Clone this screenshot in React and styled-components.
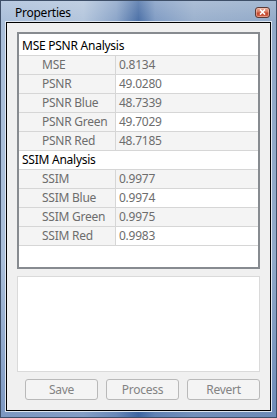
import React from "react";
import styled, { createGlobalStyle } from "styled-components";

const Global = createGlobalStyle`
  html, body { margin: 0; padding: 0; background: #fff; }
  body { font-family: "Noto Sans", "Open Sans", sans-serif; }
`;

const Window = styled.div`
  box-sizing: border-box;
  width: 277px;
  height: 418px;
  border: 1px solid #3e4f68;
  display: flex;
  flex-direction: column;
  background:
    linear-gradient(to bottom, rgba(255,255,255,0.18), rgba(255,255,255,0) 22px),
    linear-gradient(to right, #a9bed9 0%, #b3c5dc 30%, #8aa4c8 42%, #4a6fa6 50%, #7f9bc3 56%, #9ab0cd 70%, #91a9c8 100%);
`;

const TitleBar = styled.div`
  height: 21px;
  flex: none;
  display: flex;
  align-items: center;
  justify-content: space-between;
  padding: 0 6px 0 14px;
`;

const Title = styled.span`
  font-size: 12px;
  letter-spacing: -0.25px;
  color: #000;
  line-height: 16px;
  margin-top: 2px;
`;

const CloseButton = styled.div`
  box-sizing: border-box;
  width: 15px;
  height: 11px;
  margin-top: 1px;
  border: 1px solid #5b3a36;
  border-radius: 3px;
  background: linear-gradient(to bottom, #e9a792 0%, #d7785f 45%, #c2452b 55%, #d0644a 100%);
  box-shadow: inset 0 0 0 1px rgba(255, 220, 210, 0.45);
  display: flex;
  align-items: center;
  justify-content: center;
`;

const FrameBody = styled.div`
  flex: 1;
  display: flex;
  padding: 0 5px 6px 5px;
  background: linear-gradient(to bottom, rgba(0,0,0,0) 0%, rgba(40,80,150,0.0) 60%, rgba(40,80,150,0.35) 100%);
`;

const Client = styled.div`
  flex: 1;
  box-sizing: border-box;
  border: 1px solid #000;
  box-shadow: 0 0 0 1px #dfe7f1;
  margin: 0 0 0 0;
  background: #f0f0f0;
  display: flex;
  flex-direction: column;
  padding: 9px 10px 10px 10px;
`;

const Grid = styled.div`
  box-sizing: border-box;
  height: 237px;
  border: 2px solid #878b90;
  background: #fff;
  padding-top: 3px;
  display: flex;
  flex-direction: column;
`;

const CategoryRow = styled.div`
  box-sizing: border-box;
  height: 19px;
  border-bottom: 1px solid #d6d6d6;
  background: #fff;
  font-size: 12px;
  letter-spacing: -0.25px;
  color: #000;
  line-height: 18px;
  padding-left: 3px;
`;

const PropRow = styled.div`
  box-sizing: border-box;
  height: 19px;
  border-bottom: 1px solid #d6d6d6;
  display: grid;
  grid-template-columns: 97px 1fr;
  font-size: 12px;
  letter-spacing: -0.25px;
  line-height: 18px;
  color: #6d6d6d;
`;

const NameCell = styled.div`
  background: #f4f4f4;
  padding-left: 23px;
  border-right: 1px solid #d6d6d6;
`;

const ValueCell = styled.div`
  background: ${(p) => (p.$alt ? "#ffffff" : "#f4f4f4")};
  padding-left: 3px;
`;

const TextBox = styled.div`
  box-sizing: border-box;
  margin-top: 7px;
  height: 96px;
  border: 1px solid #dadada;
  background: #fff;
`;

const ButtonRow = styled.div`
  margin-top: 7px;
  display: flex;
  justify-content: flex-end;
  gap: 8px;
`;

const Button = styled.button`
  box-sizing: border-box;
  width: 73px;
  height: 21px;
  padding: 0;
  border: 1px solid #b9b9b9;
  border-radius: 3px;
  background: #f4f4f4;
  color: #838383;
  font-family: "Noto Sans", "Open Sans", sans-serif;
  font-size: 12px;
  letter-spacing: -0.25px;
  line-height: 18px;
`;

const groups = [
  {
    title: "MSE PSNR Analysis",
    rows: [
      ["MSE", "0.8134"],
      ["PSNR", "49.0280"],
      ["PSNR Blue", "48.7339"],
      ["PSNR Green", "49.7029"],
      ["PSNR Red", "48.7185"],
    ],
  },
  {
    title: "SSIM Analysis",
    rows: [
      ["SSIM", "0.9977"],
      ["SSIM Blue", "0.9974"],
      ["SSIM Green", "0.9975"],
      ["SSIM Red", "0.9983"],
    ],
  },
];

export default function App() {
  return (
    <>
      <Global />
      <Window>
        <TitleBar>
          <Title>Properties</Title>
          <CloseButton>
            <svg width="7" height="6" viewBox="0 0 7 6">
              <path d="M1 0.5 L6 5.5 M6 0.5 L1 5.5" stroke="#fff" strokeWidth="1.6" />
            </svg>
          </CloseButton>
        </TitleBar>
        <FrameBody>
          <Client>
            <Grid>
              {groups.map((g) => (
                <React.Fragment key={g.title}>
                  <CategoryRow>{g.title}</CategoryRow>
                  {g.rows.map(([n, v], i) => (
                    <PropRow key={n}>
                      <NameCell>{n}</NameCell>
                      <ValueCell $alt={i % 2 === 1}>{v}</ValueCell>
                    </PropRow>
                  ))}
                </React.Fragment>
              ))}
            </Grid>
            <TextBox />
            <ButtonRow>
              <Button disabled>Save</Button>
              <Button disabled>Process</Button>
              <Button disabled>Revert</Button>
            </ButtonRow>
          </Client>
        </FrameBody>
      </Window>
    </>
  );
}
